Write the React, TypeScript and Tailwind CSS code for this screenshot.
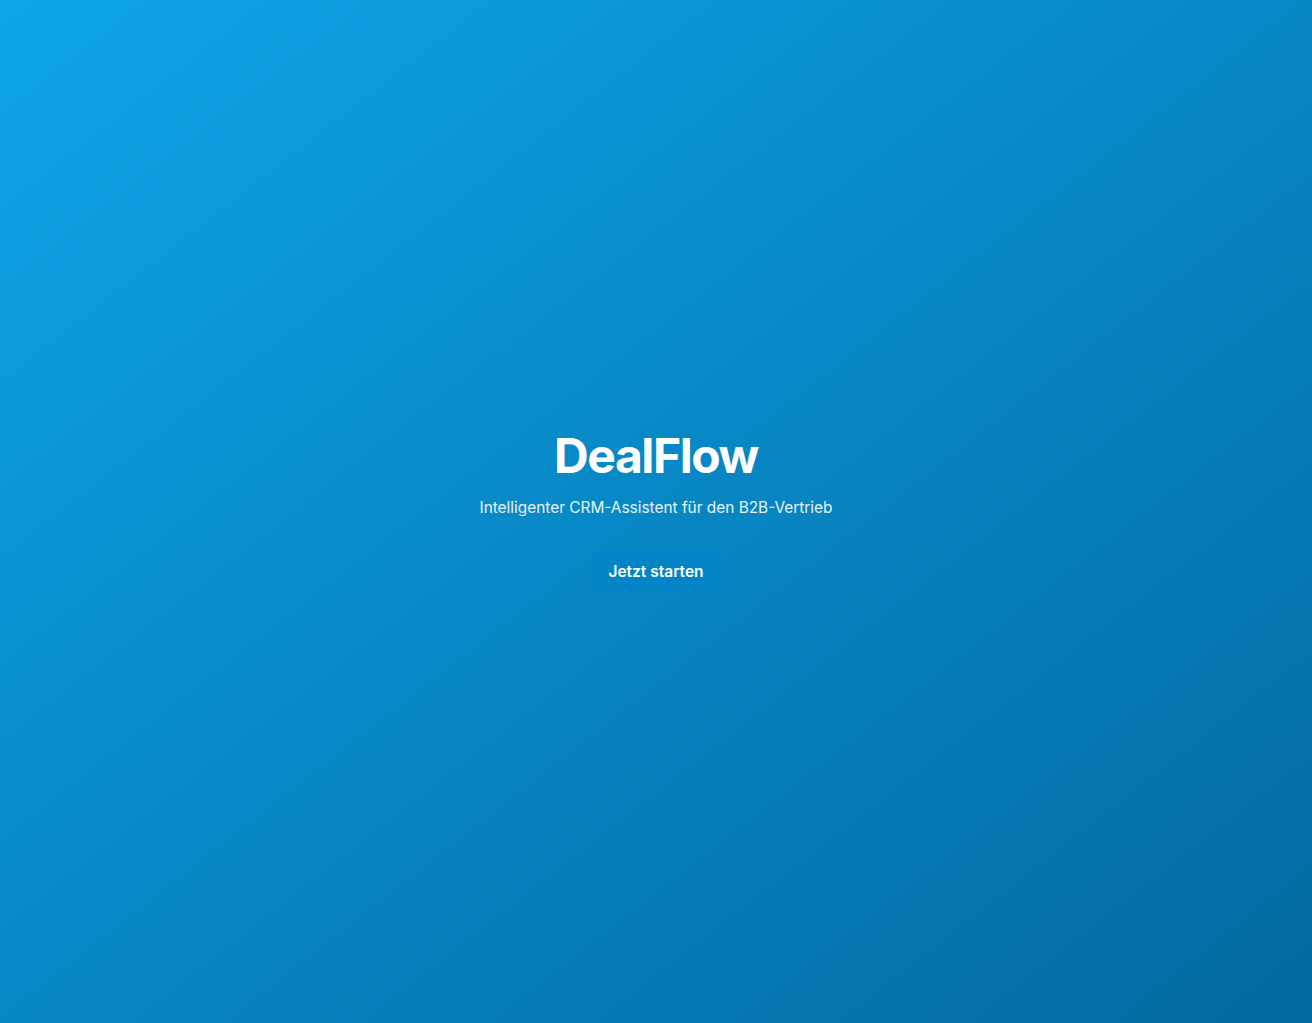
export default function App() {
  return (
    <main className="min-h-screen w-full bg-gradient-to-br from-[#0ea5e9] to-[#0369a1] flex flex-col items-center justify-center text-center font-['Inter',sans-serif]">
      <h1 className="text-5xl font-bold tracking-[-0.03em] text-white mb-4">DealFlow</h1>
      <p className="text-[15.4px] leading-6 text-white/90 mb-8">Intelligenter CRM-Assistent für den B2B-Vertrieb</p>
      <button className="px-4 py-2 rounded-md bg-[#0284c7] text-white font-semibold text-[15.5px]">
        Jetzt starten
      </button>
    </main>
  );
}
